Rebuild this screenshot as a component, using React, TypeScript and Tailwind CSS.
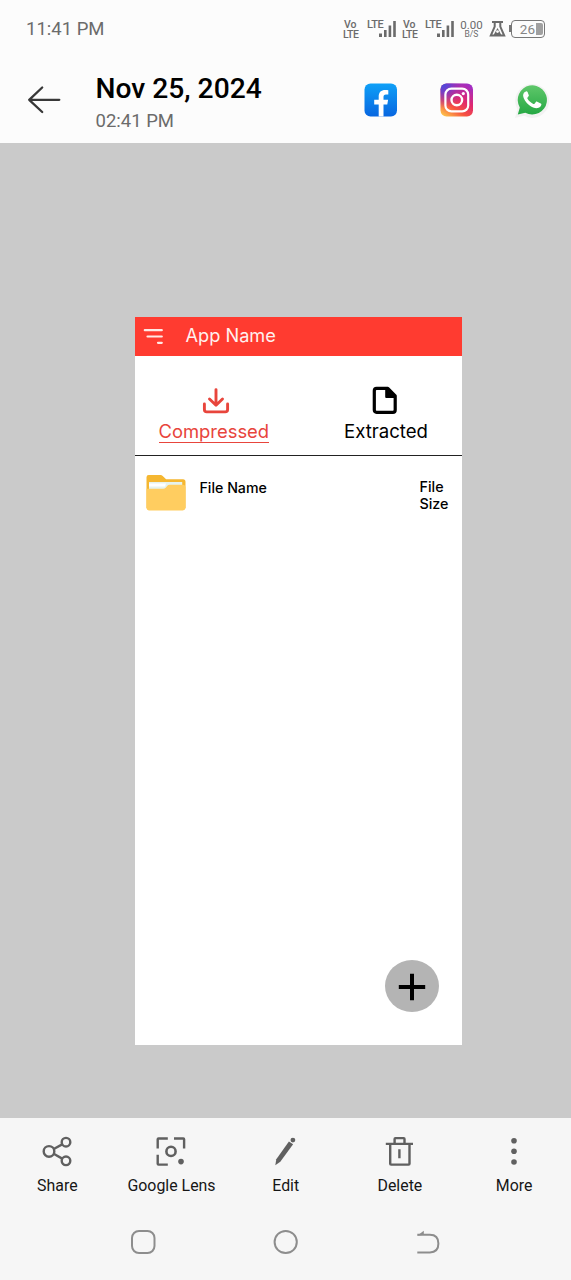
import React from "react";

const VoLte = () => (
  <div className="flex w-[17px] flex-col text-[10.5px] leading-[10px] font-medium">
    <span className="pl-px">Vo</span>
    <span className="tracking-[-0.4px]">LTE</span>
  </div>
);

const Signal = () => (
  <div className="flex w-[30px]">
    <span className="w-[12px] text-[11px] leading-[9px] font-medium tracking-[-0.4px]">LTE</span>
    <svg width="18" height="18" viewBox="0 0 18 18" className="shrink-0" fill="currentColor">
      <rect x="0" y="13.5" width="3" height="3.5" />
      <rect x="5" y="10" width="2.6" height="7" />
      <rect x="9.6" y="5.5" width="2.6" height="11.5" />
      <rect x="14.2" y="1" width="2.6" height="16" />
    </svg>
  </div>
);

const StatusBar = () => (
  <div className="flex h-[58px] items-center pl-[26px] text-[#6b6b6b]">
    <span className="w-[317px] text-[18.5px] leading-[22px]">11:41 PM</span>
    <div className="flex h-[19px] items-start">
      <VoLte />
      <div className="ml-[7px]"><Signal /></div>
      <div className="ml-[5px]"><VoLte /></div>
      <div className="ml-[6px]"><Signal /></div>
      <div className="ml-[5px] flex w-[23px] flex-col items-center leading-[10px]">
        <span className="text-[11.5px]">0.00</span>
        <span className="text-[8.5px] leading-[9px]">B/S</span>
      </div>
      <svg width="18" height="18" viewBox="0 0 18 18" className="ml-[6px]" fill="none" stroke="currentColor" strokeWidth="2">
        <path d="M3 1.9h11M5.7 2v4.6L1.8 15.6h13.4L11.3 6.6V2" />
        <path d="M4.6 15l3.9-7 3.9 7z" fill="currentColor" stroke="none" />
        <circle cx="8.5" cy="11.6" r="1.4" fill="#fcfcfc" stroke="none" />
      </svg>
      <div className="ml-[2px] flex items-center">
        <div className="h-[7px] w-[2px] bg-[#777777]" />
        <div className="flex h-[18px] w-[34px] items-center justify-end rounded-[4px] border-[1.5px] border-[#777777] pr-px">
          <span className="mr-px text-[13.5px] leading-[14px] text-[#858585]">26</span>
          <div className="h-[12px] w-[7px] rounded-r-[2px] bg-[#a0a0a0]" />
        </div>
      </div>
    </div>
  </div>
);

const Facebook = () => (
  <svg width="34" height="34" viewBox="0 0 34 34">
    <defs>
      <linearGradient id="fb" x1="0" y1="0" x2="0" y2="1">
        <stop offset="0" stopColor="#0fa0f7" />
        <stop offset="1" stopColor="#0866e0" />
      </linearGradient>
    </defs>
    <rect x="0.5" y="0.5" width="32.5" height="33" rx="6" fill="url(#fb)" />
    <path d="M14.7 33.5V21.6H10.2v-4.9h4.5v-3.2c0-4.6 2.6-6.6 6.4-6.6 1.4 0 2.5.1 3.2.3v4.3h-2.3c-1.9 0-2.5.9-2.5 2.5v2.7h4.6l-.8 4.9h-3.8v11.9z" fill="#fff" />
  </svg>
);

const Instagram = () => (
  <svg width="34" height="34" viewBox="0 0 34 34" fill="none">
    <defs>
      <linearGradient id="ig" x1="0.15" y1="1" x2="0.8" y2="0">
        <stop offset="0" stopColor="#fdc04a" />
        <stop offset="0.3" stopColor="#f7533f" />
        <stop offset="0.6" stopColor="#e0286f" />
        <stop offset="1" stopColor="#a12dc4" />
      </linearGradient>
      <radialGradient id="igb" cx="0.05" cy="0" r="0.75">
        <stop offset="0" stopColor="#3f4ee0" />
        <stop offset="0.35" stopColor="#6540d8" stopOpacity="0.85" />
        <stop offset="1" stopColor="#a12dc4" stopOpacity="0" />
      </radialGradient>
    </defs>
    <rect x="0.5" y="0.5" width="32.5" height="33" rx="6" fill="url(#ig)" />
    <rect x="0.5" y="0.5" width="32.5" height="33" rx="6" fill="url(#igb)" />
    <rect x="5.4" y="5.6" width="22.8" height="22.8" rx="6" stroke="#fff" strokeWidth="2.2" />
    <circle cx="16.8" cy="17" r="5.3" stroke="#fff" strokeWidth="2.4" />
    <circle cx="23.3" cy="10.6" r="1.6" fill="#fff" />
  </svg>
);

const WhatsApp = () => (
  <svg width="36" height="36" viewBox="0 0 36 36">
    <defs>
      <linearGradient id="wa" x1="0" y1="0" x2="0" y2="1">
        <stop offset="0" stopColor="#5fc76a" />
        <stop offset="1" stopColor="#25a844" />
      </linearGradient>
    </defs>
    <path d="M1 35l2.4-8.7A17 17 0 1 1 10 32.8z" fill="#f2f2f2" />
    <path d="M3.8 31.6l2-7.2a14.6 14.6 0 1 1 5.5 5.3z" fill="url(#wa)" />
    <path d="M13.7 9.2c-.5-.9-1.1-.9-1.7-.8-1.5.2-3 1.9-2.9 4.4.2 3 2.8 6.8 5.9 9.2 3.3 2.6 6.8 3.6 8.8 3.1 2-.5 3.5-2 3.6-3.5 0-.6 0-.8-.6-1.1l-3.6-1.8c-.6-.3-1-.2-1.3.3l-1.4 1.7c-.3.4-.7.5-1.2.2-2.7-1.2-4.6-3-5.9-5.3-.3-.5 0-.8.2-1.1l1.1-1.4c.3-.4.2-.8 0-1.2z" fill="#fff" />
  </svg>
);

const TitleBar = () => (
  <div className="flex h-[85px] items-start">
    <svg width="34" height="30" viewBox="0 0 34 30" className="mt-[27px] ml-[27px]" fill="none" stroke="#383838" strokeWidth="2.3" strokeLinecap="round" strokeLinejoin="round">
      <path d="M32.3 14.8H2.5M15.2 2.5L2.2 14.8l13 12.2" />
    </svg>
    <div className="ml-[34.5px] w-[269px]">
      <h1 className="mt-[14px] text-[28.2px] leading-[34px] font-medium text-black">Nov 25, 2024</h1>
      <p className="mt-[4px] text-[18.5px] leading-[22px] text-[#6b6b6b]">02:41 PM</p>
    </div>
    <div className="mt-[25px] -ml-px flex items-start">
      <Facebook />
      <div className="ml-[42px]"><Instagram /></div>
      <div className="ml-[40.5px]"><WhatsApp /></div>
    </div>
  </div>
);

const Folder = () => (
  <svg width="41" height="38" viewBox="0 0 41 38">
    <path d="M0.5 3.2Q0.5 1 2.7 1h11.8q1.3 0 2.2.9l3.4 3.3h16.9q2.5 0 2.5 2.5V34h-39z" fill="#f5b731" />
    <path d="M3 8h33.2v8H3z" fill="#e5f2ee" />
    <path d="M3 9.4H20l-1 3H3z" fill="#fff" />
    <path d="M0.5 14.7h16.7q1.5 0 2.5-1l1.6-1.9q.9-1 2.3-1h13.6q2.3 0 2.3 2.5v20.4q0 2.8-2.8 2.8H2.9Q.5 36.5.5 33.7z" fill="#ffcd60" />
  </svg>
);

const AppPreview = () => (
  <div className="mt-[174px] flex h-[728px] w-[326.5px] flex-col bg-white font-['Inter',sans-serif] text-black">
    <div className="flex h-[39px] items-center bg-[#ff3b30] text-white">
      <svg width="20" height="18" viewBox="0 0 20 18" className="ml-[8px]" fill="none" stroke="#ffe9e5" strokeWidth="2.2" strokeLinecap="round">
        <path d="M1.8 2.2h17M4.5 8.5h14.3M15 14.8h3.8" />
      </svg>
      <span className="-mt-[3px] ml-[22.5px] text-[18.2px] leading-[22px] text-[#fff0ee]">App Name</span>
    </div>
    <div className="flex h-[100px] justify-between border-b border-[#222222] pr-[33.5px] pl-[23.5px]">
      <div className="flex flex-col items-center text-[#e8453c]">
        <svg width="28" height="28" viewBox="0 0 28 28" className="mt-[31px] ml-[5px]" fill="none" stroke="currentColor" strokeWidth="2.9" strokeLinecap="round" strokeLinejoin="round">
          <path d="M14 2.6v15.2M7.5 12L14 18.2l6.5-6.2M2.4 17v5.6q0 2.3 2.3 2.3h18.6q2.3 0 2.3-2.3V17" />
        </svg>
        <span className="mt-[5px] border-b-[1.5px] border-[#e8453c] text-[18.4px] leading-[22px]">Compressed</span>
      </div>
      <div className="flex flex-col items-center">
        <svg width="26" height="30" viewBox="0 0 26 30" className="mt-[30px] -ml-[2px]" fill="none" stroke="currentColor" strokeWidth="3.2" strokeLinejoin="round">
          <path d="M4.6 2.4h11.2L23.2 9.9V24q0 2.3-2.3 2.3H4.6q-2.3 0-2.3-2.3V4.7Q2.3 2.4 4.6 2.4z" />
          <path d="M14.2 2.5v8.8h9z" fill="currentColor" stroke="none" />
          <path d="M14.2 2.6v8.5h8.5" strokeWidth="2" />
        </svg>
        <span className="mt-[4px] text-[18.6px] leading-[22px]">Extracted</span>
      </div>
    </div>
    <div className="flex items-start pt-[18px] pl-[11px] text-[14.2px] font-medium">
      <Folder />
      <span className="mt-[5px] ml-[12.5px] w-[220px] leading-[18px]">File Name</span>
      <span className="mt-[4px] w-[34px] text-[14.3px] leading-[17.4px]">File Size</span>
    </div>
    <button aria-label="Add" className="mt-auto mr-[22.5px] mb-[33px] flex h-[52px] w-[54px] items-center justify-center self-end rounded-[50%] bg-[#b4b4b4]">
      <svg width="28" height="28" viewBox="0 0 28 28" className="mt-[2px]" stroke="#000" strokeWidth="4">
        <path d="M14 0.8v26.4M0.8 14h26.4" />
      </svg>
    </button>
  </div>
);

const Action = ({ label, children }: { label: string; children: React.ReactNode }) => (
  <div className="flex w-[114.2px] flex-col items-center">
    <svg width="32" height="32" viewBox="0 0 32 32" fill="none" stroke="#606060" strokeWidth="2.4">
      {children}
    </svg>
    <span className="mt-[9px] ml-[0.5px] text-[15.9px] leading-[19px] whitespace-nowrap text-[#161616]">{label}</span>
  </div>
);

const Actions = () => (
  <div className="flex h-[86px] pt-[17px]">
    <Action label="Share">
      <circle cx="8" cy="16.4" r="5.3" />
      <circle cx="25" cy="7.2" r="4.3" />
      <circle cx="25" cy="25.8" r="4.3" />
      <path d="M12.7 14L21.2 9.4M12.7 18.8L21.2 23.6" />
    </Action>
    <Action label="Google Lens">
      <path d="M2.7 13.6V4.3q0-.8.8-.8h9.3M19 3.5h9.3q.8 0 .8.8v9.3M2.7 19.8v9q0 .8.8.8h9.3" />
      <circle cx="16" cy="16.4" r="4.6" strokeWidth="2.6" />
      <circle cx="26" cy="26.6" r="2.8" fill="#606060" stroke="none" />
    </Action>
    <Action label="Edit">
      <g fill="#606060" stroke="none">
        <path d="M19.9 6.4l4.2 2.9-12.8 17.4-5 3.6 1-6.1z" />
        <circle cx="23.9" cy="5.1" r="2.4" />
      </g>
    </Action>
    <Action label="Delete">
      <path d="M1.8 8.9h27.2M6.2 8.9v19.8q0 .9.9.9h17.5q.9 0 .9-.9V8.9M10.6 8.5V3.9q0-.8.8-.8h8.3q.8 0 .8.8v4.6M15.4 14.3v9" />
    </Action>
    <Action label="More">
      <g fill="#606060" stroke="none">
        <circle cx="16" cy="5.7" r="2.8" />
        <circle cx="16" cy="16.3" r="2.8" />
        <circle cx="16" cy="27" r="2.8" />
      </g>
    </Action>
  </div>
);

const Navigation = () => (
  <div className="flex justify-center gap-[114px] pt-[24px]">
    <svg width="28" height="28" viewBox="0 0 28 28" fill="none" stroke="#8d8d8d" strokeWidth="2">
      <rect x="2" y="3" width="22.5" height="22" rx="7" />
    </svg>
    <svg width="28" height="28" viewBox="0 0 28 28" fill="none" stroke="#8d8d8d" strokeWidth="2">
      <circle cx="13.7" cy="14" r="11.1" />
    </svg>
    <svg width="28" height="28" viewBox="0 0 28 28" fill="none" stroke="#8d8d8d" strokeWidth="2">
      <path d="M3.3 6.8h12.6q8.5 0 8.5 8.8t-8.5 8.8H3.3" />
      <path d="M3.2 7.8l6.6-5v4z" fill="#8d8d8d" stroke="none" />
    </svg>
  </div>
);

export default function App() {
  return (
    <div className="flex h-[1280px] w-[571px] flex-col overflow-hidden bg-[#fcfcfc] font-['Roboto',sans-serif]">
      <StatusBar />
      <TitleBar />
      <main className="flex h-[975px] items-start bg-[#cacaca] pl-[135px]">
        <AppPreview />
      </main>
      <footer className="h-[162px] bg-[#f6f6f6]">
        <Actions />
        <Navigation />
      </footer>
    </div>
  );
}
